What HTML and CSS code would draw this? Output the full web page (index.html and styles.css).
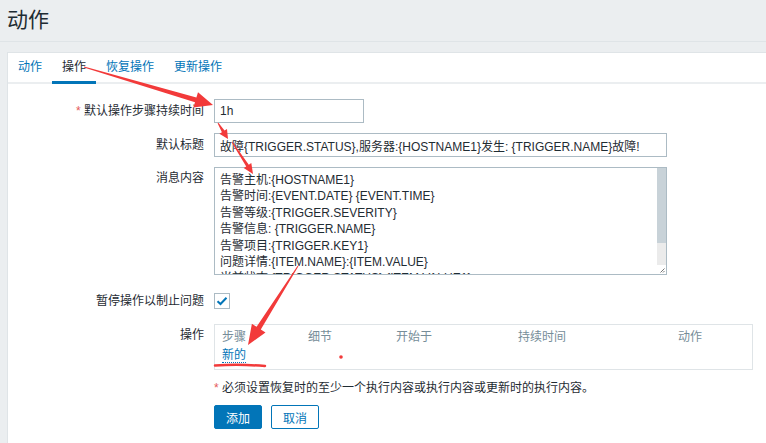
FILE: index.html
```html
<!DOCTYPE html>
<html lang="zh-CN">
<head>
<meta charset="UTF-8">
<title>动作</title>
<link rel="stylesheet" href="styles.css">
</head>
<body>
<header class="page-header">
  <h1>动作</h1>
</header>

<div class="panel">
  <ul class="tabs">
    <li><a href="#">动作</a></li>
    <li class="active"><a href="#">操作</a></li>
    <li><a href="#">恢复操作</a></li>
    <li><a href="#">更新操作</a></li>
  </ul>

  <form class="form">
    <div class="row">
      <label class="lbl"><span class="req">*</span> 默认操作步骤持续时间</label>
      <div class="field"><input class="input short" type="text" value="1h"></div>
    </div>
    <div class="row">
      <label class="lbl">默认标题</label>
      <div class="field"><input class="input wide" type="text" value="故障{TRIGGER.STATUS},服务器:{HOSTNAME1}发生: {TRIGGER.NAME}故障!"></div>
    </div>
    <div class="row">
      <label class="lbl lbl-top">消息内容</label>
      <div class="field">
        <div class="msg-box">
          <textarea class="msg">告警主机:{HOSTNAME1}
告警时间:{EVENT.DATE} {EVENT.TIME}
告警等级:{TRIGGER.SEVERITY}
告警信息: {TRIGGER.NAME}
告警项目:{TRIGGER.KEY1}
问题详情:{ITEM.NAME}:{ITEM.VALUE}
当前状态:{TRIGGER.STATUS}:{ITEM.VALUE1}
事件ID:{EVENT.ID}</textarea>
          <div class="scrollbar">
            <div class="thumb"></div>
            <div class="track"></div>
            <div class="grip">
              <svg width="9" height="9" viewBox="0 0 9 9"><path d="M7.5 3.5 L3.5 7.5 M7.5 6 L6 7.5" stroke="#777" stroke-width="1"/></svg>
            </div>
          </div>
        </div>
      </div>
    </div>
    <div class="row row-check">
      <label class="lbl">暂停操作以制止问题</label>
      <div class="field">
        <span class="checkbox">
          <svg width="12" height="10" viewBox="0 0 12 10"><path d="M1.5 5.2 L4.5 8 L10.5 1.8" fill="none" stroke="#0275b8" stroke-width="2"/></svg>
        </span>
      </div>
    </div>
    <div class="row row-ops">
      <label class="lbl lbl-top">操作</label>
      <div class="field">
        <table class="ops">
          <thead>
            <tr><th class="c1">步骤</th><th class="c2">细节</th><th class="c3">开始于</th><th class="c4">持续时间</th><th>动作</th></tr>
          </thead>
          <tbody>
            <tr><td colspan="5"><a href="#" class="link">新的</a></td></tr>
          </tbody>
        </table>
      </div>
    </div>
    <div class="row row-note">
      <div class="lbl"></div>
      <div class="field note"><span class="req">*</span> 必须设置恢复时的至少一个执行内容或执行内容或更新时的执行内容。</div>
    </div>
    <div class="row">
      <div class="lbl"></div>
      <div class="field buttons">
        <button type="button" class="btn btn-main">添加</button>
        <button type="button" class="btn btn-alt">取消</button>
      </div>
    </div>
  </form>
</div>

<!-- annotation marks drawn over the screenshot -->
<svg class="marks" width="766" height="443" viewBox="0 0 766 443">
  <g fill="#f23a3a">
    <polygon points="84.1,66.5 196.4,97.5 198,92.2 213,105 193.4,107.6 195,102.3 83.9,67.5"/>
    <polygon points="218.4,122.7 224.5,130.6 227,129 228,139 219.4,133.8 221.9,132.2 217.6,123.3"/>
    <polygon points="232.4,141.7 248.8,164.8 251.3,163.1 253,174 243.7,168.1 246.2,166.4 231.6,142.3"/>
    <polygon points="297.6,265.7 256.6,326.8 251.9,323.8 248,345 265.5,332.4 260.8,329.4 298.4,266.3"/>
    <circle cx="341" cy="357" r="1.8"/>
  </g>
  <path d="M215 365.5 Q240 364 265 366" fill="none" stroke="#f23a3a" stroke-width="2.5" stroke-linecap="round"/>
</svg>
</body>
</html>
```

FILE: styles.css
```css
/* ---------- GLOBAL ---------- */
html,body{margin:0;padding:0;}
body{background:#ebeef0;color:#1f2c33;font-family:"Liberation Sans",Arial,"Noto Sans CJK SC",sans-serif;font-size:12px;position:relative;width:766px;height:443px;overflow:hidden;}
a{color:#0275b8;text-decoration:none;}

.page-header{height:41px;border-bottom:1px solid #dfe4e7;margin:0 0 10px;}
.page-header h1{margin:0;padding:7px 0 0 7px;font-size:21px;font-weight:normal;line-height:26px;}

/* ---------- PANEL / TABS ---------- */
.panel{background:#fff;margin-left:7px;border-left:1px solid #dfe4e7;border-top:1px solid #dfe4e7;height:400px;}
.tabs{list-style:none;margin:0;padding:0;display:flex;border-bottom:2px solid #ebeef0;height:29px;}
.tabs li{padding:0 10px;}
.tabs a{display:block;line-height:27px;height:27px;padding-top:1px;}
.tabs li.active{border-bottom:3px solid #0275b8;margin-bottom:-2px;}
.tabs li.active a{color:#1f2c33;}

/* ---------- FORM ---------- */
.form{padding-top:15px;}
.row{display:flex;margin-bottom:10px;}
.lbl{width:196px;flex:none;text-align:right;padding-right:10px;line-height:24px;}
.lbl-top{line-height:16px;padding-top:3px;}
.req{color:#e45959;}
.field{flex:none;}
.input{box-sizing:border-box;height:24px;border:1px solid #acbbc4;padding:0 5px;font:inherit;color:#1f2c33;background:#fff;margin:0;display:block;}
.input.short{width:150px;}
.input.wide{width:453px;}

.msg-box{box-sizing:border-box;width:453px;height:108px;border:1px solid #acbbc4;display:flex;background:#fff;}
.msg{flex:1;border:0;margin:0;resize:none;font:inherit;color:#1f2c33;line-height:16.4px;padding:4px 5px;overflow:hidden;white-space:pre;outline:none;}
.scrollbar{width:9px;display:flex;flex-direction:column;}
.scrollbar .thumb{height:75px;background:#c8d2d8;}
.scrollbar .track{flex:1;background:#ebebeb;}
.scrollbar .grip{height:9px;background:#fff;display:flex;}

.row-check{padding-top:8px;margin-bottom:15px;}
.row-check .lbl{line-height:16px;}
.checkbox{box-sizing:border-box;width:16px;height:16px;border:1px solid #acbbc4;display:flex;align-items:center;justify-content:center;}

.ops{border:1px solid #dfe4e7;border-collapse:collapse;width:539px;}
.ops th{font-weight:normal;color:#768d99;text-align:left;padding:5px 7px 0;line-height:14px;}
.ops th.c1{width:72px;}
.ops th.c2{width:74px;}
.ops th.c3{width:108px;}
.ops th.c4{width:146px;}
.ops td{padding:4px 7px 6px;line-height:15px;}
.link{border-bottom:1px dotted #0275b8;}

.row-note{margin-bottom:9px;}
.row-note .lbl{line-height:16px;}
.note{line-height:16px;}

.buttons{display:flex;gap:9px;}
.btn{box-sizing:border-box;height:24px;width:48px;font:inherit;font-size:12px;border:1px solid #0275b8;border-radius:2px;padding:0;cursor:pointer;}
.btn-main{background:#0275b8;color:#fff;}
.btn-alt{background:#fff;color:#0275b8;}

/* ---------- ANNOTATIONS ---------- */
.marks{position:absolute;left:0;top:0;pointer-events:none;}
```
